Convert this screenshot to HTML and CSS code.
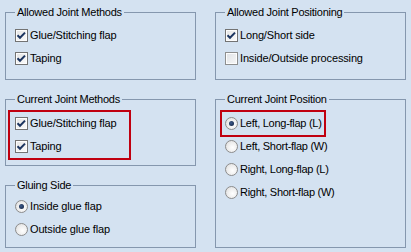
FILE: index.html
```html
<!DOCTYPE html>
<html>
<head>
<meta charset="utf-8">
<link rel="stylesheet" href="styles.css">
</head>
<body>
<div class="panel">
  <div class="col">
    <fieldset class="group g-allowed">
      <legend>Allowed Joint Methods</legend>
      <div class="rows">
        <label class="row"><span class="cb on"><svg viewBox="0 0 13 13" width="13" height="13"><path d="M2.5 6.2 5 8.8 10 3.6" fill="none" stroke="#1c3560" stroke-width="2"/></svg></span><span class="txt">Glue/Stitching flap</span></label>
        <label class="row"><span class="cb on"><svg viewBox="0 0 13 13" width="13" height="13"><path d="M2.5 6.2 5 8.8 10 3.6" fill="none" stroke="#1c3560" stroke-width="2"/></svg></span><span class="txt">Taping</span></label>
      </div>
    </fieldset>
    <fieldset class="group g-current">
      <legend>Current Joint Methods</legend>
      <div class="rows">
        <div class="mark mark-left">
          <label class="row"><span class="cb on"><svg viewBox="0 0 13 13" width="13" height="13"><path d="M2.5 6.2 5 8.8 10 3.6" fill="none" stroke="#1c3560" stroke-width="2"/></svg></span><span class="txt">Glue/Stitching flap</span></label>
          <label class="row"><span class="cb on"><svg viewBox="0 0 13 13" width="13" height="13"><path d="M2.5 6.2 5 8.8 10 3.6" fill="none" stroke="#1c3560" stroke-width="2"/></svg></span><span class="txt">Taping</span></label>
        </div>
      </div>
    </fieldset>
    <fieldset class="group g-gluing">
      <legend>Gluing Side</legend>
      <div class="rows">
        <label class="row"><span class="rb on"></span><span class="txt">Inside glue flap</span></label>
        <label class="row"><span class="rb"></span><span class="txt">Outside glue flap</span></label>
      </div>
    </fieldset>
  </div>
  <div class="col">
    <fieldset class="group g-allowed">
      <legend>Allowed Joint Positioning</legend>
      <div class="rows">
        <label class="row"><span class="cb on"><svg viewBox="0 0 13 13" width="13" height="13"><path d="M2.5 6.2 5 8.8 10 3.6" fill="none" stroke="#1c3560" stroke-width="2"/></svg></span><span class="txt">Long/Short side</span></label>
        <label class="row"><span class="cb"></span><span class="txt">Inside/Outside processing</span></label>
      </div>
    </fieldset>
    <fieldset class="group g-position">
      <legend>Current Joint Position</legend>
      <div class="rows">
        <div class="mark mark-right">
          <label class="row"><span class="rb on"></span><span class="txt">Left, Long-flap (L)</span></label>
        </div>
        <label class="row"><span class="rb"></span><span class="txt">Left, Short-flap (W)</span></label>
        <label class="row"><span class="rb"></span><span class="txt">Right, Long-flap (L)</span></label>
        <label class="row"><span class="rb"></span><span class="txt">Right, Short-flap (W)</span></label>
      </div>
    </fieldset>
  </div>
</div>
</body>
</html>
```

FILE: styles.css
```css
html, body {
  margin: 0;
  padding: 0;
}
body {
  background: #d4e2f1;
  font-family: "Liberation Sans", Arial, sans-serif;
  font-size: 11px;
  color: #000;
  width: 411px;
  height: 252px;
  overflow: hidden;
}
.panel {
  display: grid;
  grid-template-columns: 191px 191px;
  column-gap: 19px;
  padding: 6px 0 0 5px;
}
.col {
  display: flex;
  flex-direction: column;
  gap: 13px;
}
.group {
  box-sizing: border-box;
  margin: 0;
  min-width: 0;
  border: 1px solid #8597ae;
  padding: 5px 0 0 0;
}
.group legend {
  margin-left: 9px;
  padding: 0 2px;
  line-height: 13px;
  font-size: 11px;
  letter-spacing: -0.25px;
}
.g-allowed { height: 74px; }
.g-current { height: 73px; }
.g-gluing { height: 69px; padding-top: 3px; }
.g-position { height: 155px; }

.rows {
  display: flex;
  flex-direction: column;
}
.row {
  display: flex;
  align-items: center;
  height: 23px;
  padding-left: 9px;
  line-height: 13px;
  white-space: nowrap;
}
.txt {
  margin-left: 2px;
  letter-spacing: -0.15px;
}
.g-position .txt {
  letter-spacing: -0.28px;
}
.mark {
  border: 2px solid #c00010;
  margin-top: -1px;
}
.mark .row {
  padding-left: 5px;
}
.mark-left {
  width: 119px;
  margin-left: 2px;
}
.mark-right {
  width: 102px;
  margin-left: 4px;
  margin-bottom: -2px;
}
.mark-right .row {
  padding-left: 3px;
}

.cb {
  box-sizing: border-box;
  width: 13px;
  height: 13px;
  flex: none;
  border: 1px solid #737373;
  background: linear-gradient(135deg, #e4e4e4, #fbfbfb);
  box-shadow: inset 0 0 0 1px #fdfdfd;
  position: relative;
}
.cb svg {
  position: absolute;
  left: -1px;
  top: -1px;
}
.cb:not(.on) {
  border-color: #8e8f8f;
  background: linear-gradient(135deg, #dfe2e6, #f7f7f7);
}
.rb {
  box-sizing: border-box;
  width: 13px;
  height: 13px;
  flex: none;
  border-radius: 50%;
  border: 1px solid #8c8c8c;
  background: radial-gradient(circle at 60% 60%, #ffffff 0%, #f0f0f0 45%, #dadada 100%);
  display: flex;
  align-items: center;
  justify-content: center;
}
.rb.on::after {
  content: "";
  width: 5px;
  height: 5px;
  border-radius: 50%;
  background: radial-gradient(circle at 40% 40%, #3c5a8a, #0f1e3c);
}
```
